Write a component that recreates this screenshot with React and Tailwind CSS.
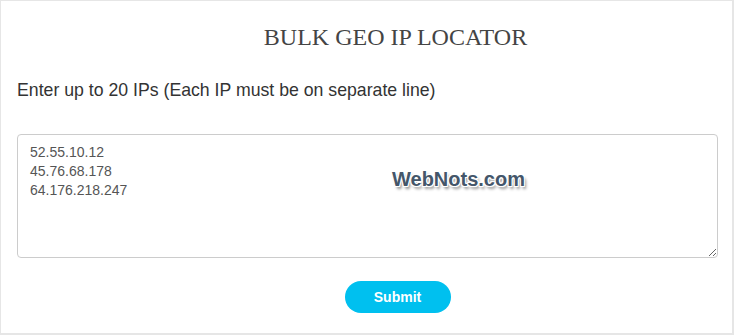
import React from 'react';

const App = () => {
  return (
    <div className="w-[734px] h-[335px] bg-white border-t border-l border-r-2 border-b-2 border-[#e6e6e6] overflow-hidden" style={{ fontFamily: '"Liberation Sans", Arial, sans-serif' }}>
      <div className="px-4">
        <h1 className="pt-[22px] pl-[58px] text-center text-[24px] leading-[28px] text-[#444]" style={{ fontFamily: '"Liberation Serif", "Times New Roman", serif' }}>
          BULK GEO IP LOCATOR
        </h1>
        <p className="mt-[27px] text-[17.7px] leading-[24px] text-[#333]">
          Enter up to 20 IPs (Each IP must be on separate line)
        </p>
        <div className="relative mt-[32px]">
          <textarea
            className="block w-[701px] h-[124px] border border-[#ccc] rounded-[4px] px-3 pt-[8px] pb-[6px] text-[14px] leading-[19px] text-[#555] resize-y outline-none"
            style={{ fontFamily: '"Liberation Sans", Arial, sans-serif' }}
            defaultValue={'52.55.10.12\n45.76.68.178\n64.176.218.247'}
          />
          <span
            className="absolute left-[375px] top-[30px] text-[20px] font-bold text-[#44566a] pointer-events-none"
            style={{ textShadow: '1px 1px 0 #fff, -1px -1px 0 #fff, 1px -1px 0 #fff, -1px 1px 0 #fff, 2px 3px 3px rgba(0,0,0,0.45)' }}
          >
            WebNots.com
          </span>
        </div>
        <div className="flex justify-center mt-[23px] pl-[62px]">
          <button className="w-[106px] h-[32px] rounded-full bg-[#00c0ef] text-white text-[14px] font-bold">
            Submit
          </button>
        </div>
      </div>
    </div>
  );
};

export default App;
